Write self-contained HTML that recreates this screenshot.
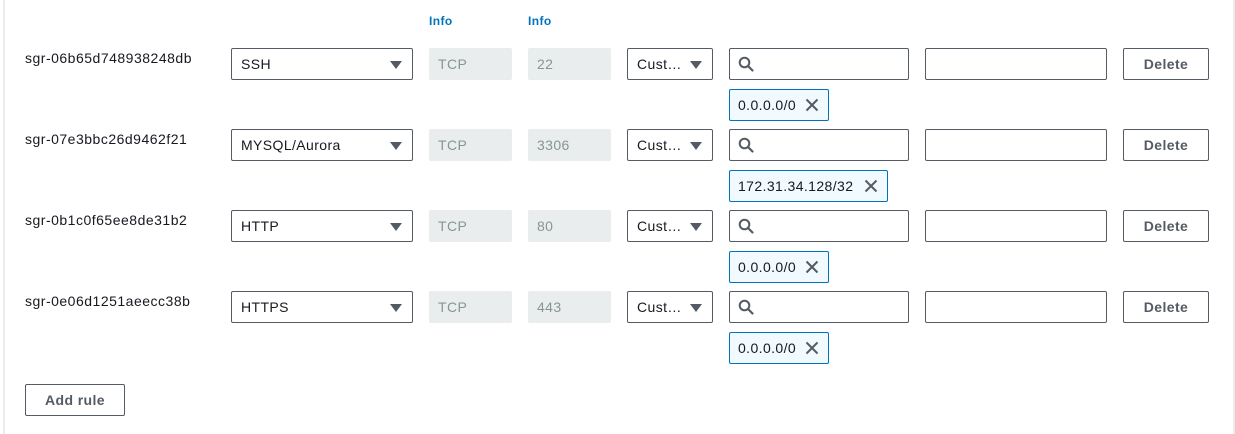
<!DOCTYPE html>
<html><head><style>
body{margin:0;width:1235px;height:434px;background:#fff;font-family:"Liberation Sans",sans-serif;color:#16191f;position:relative;overflow:hidden;letter-spacing:0.4px}
.b{position:absolute;box-sizing:border-box}
.lb{left:3px;top:0;width:2px;height:434px;background:#eaeded}
.rb{left:1233px;top:0;width:2px;height:434px;background:#eaeded}
.info{position:absolute;top:14px;font-size:12px;font-weight:bold;color:#0073bb}
.id{position:absolute;left:25px;font-size:14px;letter-spacing:0.5px}
.sel{border:1px solid #545b64;border-radius:2px;font-size:14px;padding:0 9px;line-height:30px;height:32px;background:#fff}
.sel .ar{position:absolute;right:10px;top:12px;width:0;height:0;border-left:6px solid transparent;border-right:6px solid transparent;border-top:8px solid #545b64}
.dis{background:#eaeded;border-radius:2px;height:32px;line-height:32px;padding-left:9px;font-size:14px;color:#879596}
.inp{border:1px solid #545b64;border-radius:2px;height:32px;background:#fff}
.btn{border:1px solid #545b64;border-radius:2px;height:32px;line-height:30px;text-align:center;font-size:14px;font-weight:bold;color:#545b64;background:#fff}
.tag{border:1px solid #0073bb;border-radius:2px;background:#f1faff;height:32px;line-height:30px;font-size:14px;padding-left:8px}
</style></head><body>
<div class="b lb"></div><div class="b rb"></div>
<div class="info" style="left:429px">Info</div>
<div class="info" style="left:528px">Info</div>
<div id="rows"></div>
<script>
const rows=[["sgr-06b65d748938248db","SSH","22","0.0.0.0/0",100],["sgr-07e3bbc26d9462f21","MYSQL/Aurora","3306","172.31.34.128/32",159],["sgr-0b1c0f65ee8de31b2","HTTP","80","0.0.0.0/0",100],["sgr-0e06d1251aeecc38b","HTTPS","443","0.0.0.0/0",100]];
let h="";
rows.forEach((r,i)=>{const y=48+i*81;
h+=`<div class="id" style="top:${y+2}px">${r[0]}</div>
<div class="b sel" style="left:231px;top:${y}px;width:182px">${r[1]}<span class="ar"></span></div>
<div class="b dis" style="left:429px;top:${y}px;width:83px">TCP</div>
<div class="b dis" style="left:528px;top:${y}px;width:83px">${r[2]}</div>
<div class="b sel" style="left:627px;top:${y}px;width:86px">Cust…<span class="ar"></span></div>
<div class="b inp" style="left:729px;top:${y}px;width:180px"><svg style="position:absolute;left:8px;top:7px" width="16" height="16" viewBox="0 0 16 16"><circle cx="6.5" cy="6.5" r="4.8" fill="none" stroke="#545b64" stroke-width="2"/><path d="M10 10L14.5 14.5" stroke="#545b64" stroke-width="2.2" stroke-linecap="round"/></svg></div>
<div class="b inp" style="left:925px;top:${y}px;width:182px"></div>
<div class="b btn" style="left:1123px;top:${y}px;width:86px">Delete</div>
<div class="b tag" style="left:729px;top:${y+41}px;width:${r[4]}px">${r[3]}<svg style="position:absolute;right:9px;top:8px" width="14" height="14" viewBox="0 0 14 14"><path d="M1.5 1.5L12.5 12.5M12.5 1.5L1.5 12.5" stroke="#545b64" stroke-width="2"/></svg></div>`;});
document.getElementById("rows").innerHTML=h;
</script>
<div class="b btn" style="left:25px;top:384px;width:100px">Add rule</div>
</body></html>
